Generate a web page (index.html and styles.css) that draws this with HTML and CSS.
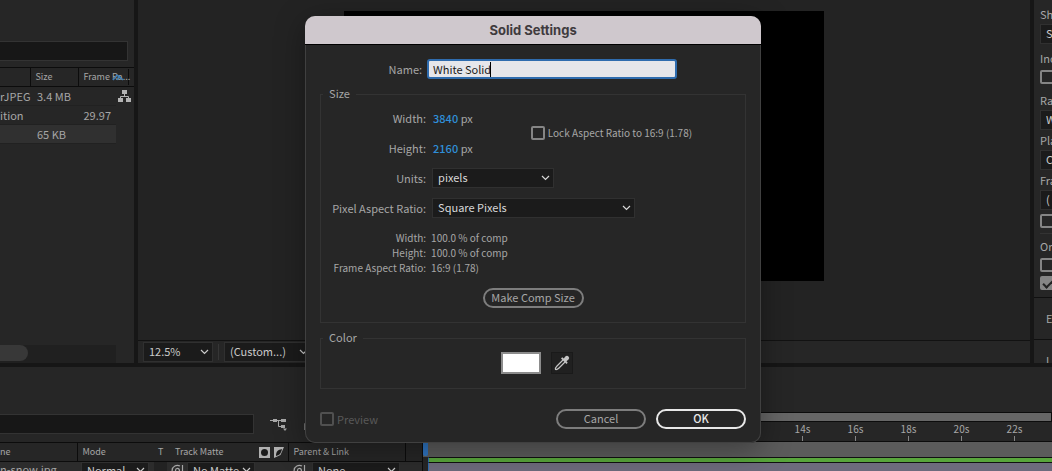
FILE: index.html
```html
<!DOCTYPE html>
<html lang="en">
<head>
	<meta charset="UTF-8">
	<meta name="viewport" content="width=device-width, initial-scale=1">
	<title>Solid Settings</title>
	<link rel="stylesheet" href="styles.css">
</head>
<body>

	<!-- shared icons -->
	<svg class="defs" width="0" height="0">
		<symbol id="chevron" viewBox="0 0 9 6"><path d="M1 1l3.5 3.5L8 1" fill="none" stroke="currentColor" stroke-width="1.2"/></symbol>
		<symbol id="swirl" viewBox="0 0 13 13"><path d="M8.5 6.5a2 2 0 1 1-2-2.2c2 0 2 1.500 2 3.200M8.500 11.500A5.300 5.300 0 1 1 9 2M11.500 1v7.500q0 1.500-2 1.500" fill="none" stroke="currentColor" stroke-width="1.200"/></symbol>
	</svg>

	<div class="top">
		<section class="project">
			<input class="search" type="text" aria-label="Search project">
			<table class="files">
				<colgroup><col class="c-type"><col class="c-size"><col class="c-rate"><col class="c-flow"></colgroup>
				<thead>
					<tr>
						<th></th>
						<th>Size</th>
						<th colspan="2">
							<div class="rate">Frame Ra...
								<svg class="sort" width="12" height="8" viewBox="0 0 12 8"><path d="M1 7l4-5 4 4M5 7l2-4 4 4" fill="none" stroke="#3f7fb5" stroke-width="1.3"/></svg>
							</div>
						</th>
					</tr>
				</thead>
				<tbody>
					<tr>
						<td>rJPEG</td><td>3.4 MB</td><td></td>
						<td class="flow" rowspan="3">
							<svg width="13" height="12" viewBox="0 0 13 12"><path d="M4 0h5v4H4zM0 8h5v4H0zM8 8h5v4H8z" fill="#b4b4b4"/><path d="M6.500 4v2M2.500 8V6.500h8V8" fill="none" stroke="#b4b4b4"/></svg>
						</td>
					</tr>
					<tr><td>ition</td><td></td><td class="num">29.97</td></tr>
					<tr class="selected"><td></td><td>65 KB</td><td></td></tr>
				</tbody>
			</table>
			<div class="scroll"><div class="thumb"></div></div>
		</section>

		<section class="comp">
			<div class="canvas"></div>
			<div class="comp-bar">
				<span class="select zoom">
					<select aria-label="Magnification"><option>12.5%</option></select>
					<svg width="9" height="6"><use href="#chevron"/></svg>
				</span>
				<span class="bar-line"></span>
				<span class="select res">
					<select aria-label="Resolution"><option>(Custom...)</option></select>
					<svg width="9" height="6"><use href="#chevron"/></svg>
				</span>
			</div>
		</section>

		<section class="preview">
			<div class="options">
				<label for="p1">Sh</label>
				<select id="p1"><option>S</option></select>
				<label for="p2" class="wide">Inc</label>
				<input id="p2" type="checkbox">
				<label for="p3" class="wide range">Ra</label>
				<select id="p3"><option>W</option></select>
				<label for="p4">Pla</label>
				<select id="p4"><option>C</option></select>
				<label for="p5">Fra</label>
				<select id="p5"><option>(</option></select>
				<input type="checkbox" aria-label="Full screen">
				<div class="on">On</div>
				<input type="checkbox" aria-label="If caching">
				<input type="checkbox" aria-label="Move time" checked>
			</div>
			<div class="closed">E</div>
			<div class="closed">L</div>
		</section>
	</div>

	<div class="timeline">
		<section class="layers">
			<div class="layer-tools">
				<input class="search" type="text" aria-label="Search layers">
				<svg width="18" height="13" viewBox="0 0 18 13"><path d="M0 2.500h11M8.500 2.500v6h4" fill="none" stroke="#a8a8a8"/><path d="M3 1h4v3H3zM11 1h5v3h-5zM11 7h4v3h-4zM13 10.500h4L15 13z" fill="#a8a8a8"/></svg>
				<svg class="shy" width="10" height="12" viewBox="0 0 10 12"><path d="M1 12V6h8v6M3 6V2h4v4" fill="none" stroke="#8a8a8a" stroke-width="1.500"/></svg>
			</div>
			<table class="layer-list">
				<colgroup><col class="l-name"><col class="l-mode"><col class="l-t"><col class="l-matte"><col class="l-icons"><col class="l-parent"><col></colgroup>
				<thead>
					<tr>
						<th>ne</th>
						<th class="line">Mode</th>
						<th>T</th>
						<th>Track Matte</th>
						<th class="icons">
							<svg width="25" height="11" viewBox="0 0 25 11"><path d="M0 0h11v11H0z" fill="#b0b0b0"/><circle cx="5.500" cy="5.500" r="3.500" fill="#1c1c1c"/><path d="M15 0h10L21.500 8 15 11z" fill="#b0b0b0"/><path d="M17 9c0-5 2-6 6-7-1 4-2 6-6 7z" fill="#1c1c1c"/></svg>
						</th>
						<th class="line">Parent &amp; Link</th>
						<th class="line"></th>
					</tr>
				</thead>
				<tbody>
					<tr>
						<td class="file">n-snow.jpg</td>
						<td>
							<span class="select mode">
								<select aria-label="Mode"><option>Normal</option></select>
								<svg width="9" height="6"><use href="#chevron"/></svg>
							</span>
						</td>
						<td><div class="cell"></div></td>
						<td colspan="2">
							<div class="pick">
								<svg width="13" height="13"><use href="#swirl"/></svg>
								<span class="select matte">
									<select aria-label="Track Matte"><option>No Matte</option></select>
									<svg width="9" height="6"><use href="#chevron"/></svg>
								</span>
							</div>
						</td>
						<td>
							<div class="pick link">
								<svg width="13" height="13"><use href="#swirl"/></svg>
								<span class="select parent">
									<select aria-label="Parent"><option>None</option></select>
									<svg width="9" height="6"><use href="#chevron"/></svg>
								</span>
							</div>
						</td>
						<td></td>
					</tr>
				</tbody>
			</table>
		</section>
		<section class="ruler">
			<div class="navigator"></div>
			<div class="times">
				<span>14s</span><span>16s</span><span>18s</span><span>20s</span><span>22s</span>
			</div>
			<div class="work-area"><div class="playhead"></div></div>
			<div class="cache"></div>
			<div class="clip"></div>
		</section>
	</div>

	<form class="dialog" role="dialog" aria-labelledby="title">
		<h1 id="title">Solid Settings</h1>
		<div class="body">
			<div class="name-row">
				<label for="name">Name:</label>
				<div class="name-box">
					<input id="name" type="text" value="White Solid">
					<span class="caret"></span>
				</div>
			</div>

			<fieldset class="size">
				<legend>Size</legend>
				<div class="dims">
					<div>
						<div class="row"><span class="label">Width:</span><span><a href="#">3840</a> px</span></div>
						<div class="row"><span class="label">Height:</span><span><a href="#">2160</a> px</span></div>
					</div>
					<label class="check small"><input type="checkbox">Lock Aspect Ratio to 16:9 (1.78)</label>
				</div>
				<div class="row">
					<label class="label" for="units">Units:</label>
					<span class="select units">
						<select id="units"><option>pixels</option></select>
						<svg width="9" height="6"><use href="#chevron"/></svg>
					</span>
				</div>
				<div class="row">
					<label class="label" for="par">Pixel Aspect Ratio:</label>
					<span class="select par">
						<select id="par"><option>Square Pixels</option></select>
						<svg width="9" height="6"><use href="#chevron"/></svg>
					</span>
				</div>
				<dl class="stats small">
					<dt>Width:</dt><dd>100.0 % of comp</dd>
					<dt>Height:</dt><dd>100.0 % of comp</dd>
					<dt>Frame Aspect Ratio:</dt><dd>16:9 (1.78)</dd>
				</dl>
				<button class="comp-size" type="button">Make Comp Size</button>
			</fieldset>

			<fieldset class="color">
				<legend>Color</legend>
				<div class="color-row">
					<button class="swatch" type="button" aria-label="Color"></button>
					<button class="dropper" type="button" aria-label="Eyedropper">
						<svg width="16" height="16" viewBox="0 0 16 16"><path d="M9 5L3 11q-2 2-1.500 3.500Q3 15 5 13l6-6" fill="none" stroke="#c4c4c4" stroke-width="1.200"/><path d="M7 3.500l1.200-1.200 1.600 1.200 1.500-2Q13 0 14.500 1.500T14.500 4.500l-2 1.700 1.200 1.600L12.500 9z" fill="#c4c4c4"/></svg>
					</button>
				</div>
			</fieldset>

			<div class="footer">
				<label class="check off"><input type="checkbox" disabled>Preview</label>
				<button type="button">Cancel</button>
				<button class="ok" type="submit">OK</button>
			</div>
		</div>
	</form>

</body>
</html>
```

FILE: styles.css
```css
* { box-sizing: border-box; }

body {
	margin: 0;
	min-height: 100vh;
	display: flex;
	flex-direction: column;
	position: relative;
	overflow: hidden;
	background: #161616;
	color: #a6a6a6;
	font: 11px/16px "Noto Sans CJK SC", "Noto Sans", sans-serif;
}

.defs { position: absolute; }

button, input, select {
	margin: 0;
	font: inherit;
	color: inherit;
}

svg { display: block; }

/* drop-downs: the arrow shares the grid cell with the select */
.select {
	display: inline-grid;
	align-items: center;
	color: #cacaca;
}
.select > * { grid-area: 1 / 1; }
.select svg {
	justify-self: end;
	margin-right: 4px;
	pointer-events: none;
}
select {
	appearance: none;
	width: 100%;
	height: 20px;
	padding: 0 5px 2px;
	border: 1px solid #303030;
	border-radius: 0;
	background: #1b1b1b;
}

input[type="checkbox"] {
	appearance: none;
	flex: none;
	width: 14px;
	height: 14px;
	border: 2px solid #858585;
	border-radius: 2px;
}
input[type="checkbox"]:checked { background: #858585; }
input[type="checkbox"]:checked::after {
	content: "";
	display: block;
	width: 8px;
	height: 4px;
	margin: 2px 1px;
	border: solid #222;
	border-width: 0 0 2px 2px;
	transform: rotate(-45deg);
}

.search {
	display: block;
	height: 20px;
	border: 1px solid #333;
	border-left: 0;
	background: #171717;
}

table {
	border-collapse: collapse;
	table-layout: fixed;
}
th, td {
	padding: 0;
	text-align: left;
	font-weight: normal;
	white-space: nowrap;
}

/* panels above the timeline */
.top {
	display: flex;
	height: 363px;
	gap: 4px;
}

.project {
	width: 134px;
	flex: none;
	display: flex;
	flex-direction: column;
	padding-top: 41px;
	background: #262626;
}
.project .search { width: 128px; }
.files {
	width: 134px;
	margin-top: 6px;
	border-top: 1px solid #0c0c0c;
}
.c-type { width: 30px; }
.c-size { width: 48px; }
.c-rate { width: 38px; }
.files thead { border-bottom: 1px solid #0c0c0c; }
.files th {
	height: 19px;
	font-size: 9px;
}
.files th + th {
	padding-left: 5px;
	border-left: 1px solid #0c0c0c;
}
.rate {
	position: relative;
	width: 45px;
	border-right: 1px solid #0c0c0c;
}
.sort {
	position: absolute;
	right: 4px;
	top: 4px;
}
.files td {
	height: 19px;
	border-bottom: 1px solid #212121;
}
.files td + td { padding-left: 7px; }
.files .num {
	padding: 0 5px 0 0;
	text-align: right;
}
.selected td { background: #303030; }
.files .flow {
	padding: 3px 2px;
	vertical-align: top;
	border: 0;
}
.scroll {
	width: 116px;
	margin-top: auto;
	padding-bottom: 2px;
	background: #202020;
}
.thumb {
	width: 28px;
	height: 16px;
	border-radius: 0 8px 8px 0;
	background: #383838;
}

.comp {
	flex: 1;
	display: flex;
	flex-direction: column;
	background: #232323;
}
.canvas {
	width: 480px;
	height: 270px;
	margin: 11px auto 0;
	background: #000;
}
.comp-bar {
	display: flex;
	align-items: center;
	gap: 5px;
	height: 23px;
	margin-top: auto;
	padding-left: 5px;
	border-top: 1px solid #121212;
	background: #262626;
}
.zoom { width: 70px; }
.res { width: 88px; }
.bar-line {
	width: 1px;
	height: 16px;
	background: #363636;
}

.preview {
	width: 18px;
	flex: none;
	overflow: hidden;
	background: #262626;
}
.options {
	display: flex;
	flex-direction: column;
	align-items: flex-start;
	width: 120px;
	height: 298px;
	padding: 6px 0 0 6px;
	border-bottom: 1px solid #101010;
}
.options label { height: 18px; }
.options .wide {
	height: 22px;
	padding-top: 4px;
}
.options .range {
	margin-top: 2px;
}
.options select {
	width: 100px;
	color: #cacaca;
	margin-bottom: 2px;
}
.options input { margin: 2px 0; }
.on {
	width: 100%;
	margin-top: 3px;
	padding: 4px 0 2px;
	border-top: 1px solid #333;
}
.closed {
	height: 42px;
	padding: 12px;
	border-bottom: 1px solid #101010;
}

/* timeline */
.timeline {
	flex: 1;
	display: flex;
	height: 104px;
	margin-top: 4px;
	background: #262626;
}
.layers {
	flex: none;
	width: 423px;
	height: 104px;
	overflow: hidden;
	border-right: 1px solid #0c0c0c;
}
.layer-tools {
	display: flex;
	align-items: center;
	gap: 16px;
	height: 75px;
	padding-top: 39px;
}
.layer-tools .search { width: 254px; }
.layer-list {
	width: 422px;
	border-top: 1px solid #0c0c0c;
}
.l-name { width: 77px; }
.l-mode { width: 77px; }
.l-t { width: 17px; }
.l-matte { width: 88px; }
.l-icons { width: 29px; }
.l-parent { width: 117px; }
.layer-list thead { border-bottom: 1px solid #0c0c0c; }
.layer-list th {
	height: 19px;
	padding-left: 4px;
	font-size: 9px;
}
.layer-list th:first-child { padding-left: 0; }
.layer-list .icons { padding-left: 0; }
.layer-list .line {
	padding-left: 5px;
	border-left: 1px solid #0c0c0c;
}
.layer-list td {
	height: 16px;
	vertical-align: top;
	background: #2c2c2c;
	line-height: 14px;
}
.layer-list select { height: 16px; }
.layer-list .select { vertical-align: top; }
.mode { width: 68px; margin-left: 4px; }
.matte { width: 68px; }
.parent { width: 88px; }
.cell {
	width: 13px;
	height: 16px;
	background: #222;
}
.pick {
	display: flex;
	align-items: center;
	gap: 3px;
}
.link { gap: 6px; padding-left: 5px; }

.ruler {
	flex: 1;
	padding-top: 45px;
}
.navigator {
	height: 10px;
	border: 1px solid #0c0c0c;
	background: #666;
}
.times {
	display: flex;
	justify-content: flex-end;
	height: 20px;
	padding-right: 11px;
	border-bottom: 1px solid #0c0c0c;
	font-size: 10px;
	line-height: 14px;
}
.times span {
	width: 53px;
	text-align: center;
}
.times span::after {
	content: "";
	display: block;
	width: 1px;
	height: 5px;
	margin: 0 auto;
	background: #858585;
}
.work-area {
	height: 15px;
	background: #5b5b5b;
}
.playhead {
	width: 5px;
	height: 14px;
	border-radius: 0 0 2px 2px;
	background: #2f74c0;
}
.cache {
	height: 6px;
	margin-left: 5px;
	border: 1px solid #101010;
	border-width: 1px 0;
	border-left: 1px solid #2d6cb0;
	background: #58a53c;
}
.clip {
	height: 8px;
	margin-left: 5px;
	border-left: 1px solid #2d6cb0;
	background: #6d6b7d;
}

/* dialog floats over the workspace */
.dialog {
	position: absolute;
	top: 16px;
	left: 29%;
	width: 456px;
	border-radius: 10px;
	background: #262626;
	box-shadow: inset 0 0 0 1px #404040, 0 6px 30px rgba(0, 0, 0, .35);
}
h1 {
	margin: 0;
	border-bottom: 1px solid #000;
	border-radius: 10px 10px 0 0;
	background: #cfc8cd;
	color: #3f3b3e;
	font: bold 13px/28px Inter, sans-serif;
	text-align: center;
}
.body { padding: 14px 15px; }

.name-row {
	display: flex;
	align-items: center;
	gap: 5px;
	margin-bottom: 7px;
}
.name-row > label {
	width: 102px;
	text-align: right;
}
.name-box {
	position: relative;
	width: 250px;
}
.name-box input {
	display: block;
	width: 100%;
	height: 20px;
	padding: 0 4px;
	border: 2px solid #2f6cae;
	border-radius: 3px;
	outline: 0;
	background: #e6e6ea;
	color: #1c1c1c;
}
.caret {
	position: absolute;
	top: 3px;
	left: 63px;
	width: 1px;
	height: 15px;
	background: #000;
}

fieldset {
	min-width: 0;
	margin: 0;
	border: 1px solid #333;
}
legend {
	margin-left: 2px;
	padding: 0 6px 1px;
	line-height: 15px;
}
.size { padding: 1px 0 14px; }
.dims {
	display: flex;
	align-items: center;
	gap: 58px;
}
.row {
	display: flex;
	align-items: center;
	height: 30px;
}
.label {
	width: 105px;
	padding-bottom: 1px;
	text-align: right;
}
.row > span + span { margin-left: 7px; }
.row > label + span { margin-left: 6px; }
.row a {
	color: #2f8fd8;
	font-weight: 500;
	text-decoration: none;
}
.units { width: 122px; }
.par { width: 203px; }
.units, .par { color: #d8d8d8; }
.check {
	display: flex;
	align-items: center;
	gap: 3px;
}
.small { font-size: 10px; }
.stats {
	display: grid;
	grid-template-columns: 105px auto;
	column-gap: 5px;
	margin: 7px 0 13px;
	line-height: 15px;
}
.stats dt { text-align: right; }
.stats dd { margin: 0; }

.dialog button {
	height: 20px;
	padding: 0 0 2px;
	border: 2px solid #7d7d7d;
	border-radius: 10px;
	background: none;
	line-height: 14px;
}
.dialog .comp-size {
	display: block;
	width: 101px;
	margin: 0 auto;
}

.color {
	margin-top: 7px;
	padding: 6px 0 14px;
}
.color-row {
	display: flex;
	justify-content: center;
	gap: 10px;
	padding-left: 7px;
}
.dialog .swatch {
	width: 40px;
	height: 22px;
	border-radius: 0;
	border-color: #8c8c8c;
	background: #fff;
}
.dialog .dropper {
	display: grid;
	place-items: center;
	width: 22px;
	height: 22px;
	padding: 0;
	border: 1px solid #1a1a1a;
	border-radius: 0;
	background: #202020;
}

.footer {
	display: flex;
	align-items: center;
	gap: 10px;
	margin-top: 20px;
}
.footer .check {
	margin-right: auto;
	color: #595959;
}
.off input[type="checkbox"] { border-color: #505050; }
.footer button { width: 90px; }
.dialog .ok {
	border-color: #e8e8e8;
	color: #e8e8e8;
	font-weight: 500;
}
```
